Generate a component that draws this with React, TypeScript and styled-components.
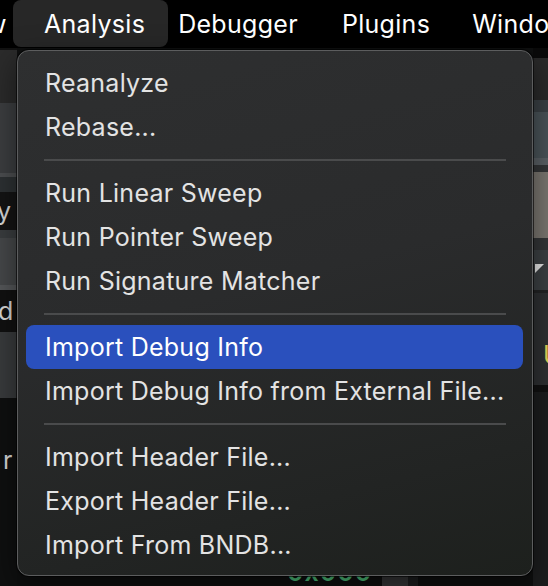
import React from 'react';
import styled, { createGlobalStyle } from 'styled-components';

const GlobalStyle = createGlobalStyle`
    html, body {
        margin: 0;
        padding: 0;
        background: #000;
    }
    body {
        font-family: Inter, "Noto Sans", "Liberation Sans", sans-serif;
        -webkit-font-smoothing: antialiased;
    }
`;

const Page = styled.div`
    position: relative;
    width: 548px;
    height: 586px;
    overflow: hidden;
    background: #0e0f0f;
    display: flex;
    flex-direction: column;
`;

const MenuBar = styled.div`
    height: 48px;
    flex: none;
    background: #000;
    display: flex;
    align-items: stretch;
`;

const MenuBarItem = styled.div<{ active?: boolean; pad?: string }>`
    display: flex;
    align-items: center;
    padding: ${(p) => p.pad || '0 21px'};
    margin-bottom: 1px;
    border-radius: 8px;
    background: ${(p) => (p.active ? '#272727' : 'transparent')};
    color: #fff;
    font-size: 25px;
    letter-spacing: 0.3px;
    white-space: nowrap;
`;

const EdgeItem = styled(MenuBarItem)`
    width: 13px;
    flex: none;
    overflow: hidden;
`;

const EdgeText = styled.span`
    margin-left: -14px;
`;

const Workspace = styled.div`
    flex: 1;
    display: flex;
    min-height: 0;
`;

const SidePane = styled.div<{ width: number }>`
    width: ${(p) => p.width}px;
    flex: none;
    display: flex;
    flex-direction: column;
    overflow: hidden;
`;

const Band = styled.div<{ h?: number; bg: string; align?: string }>`
    height: ${(p) => (p.h ? `${p.h}px` : 'auto')};
    flex: ${(p) => (p.h ? 'none' : '1')};
    background: ${(p) => p.bg};
    display: flex;
    align-items: ${(p) => p.align || 'center'};
    overflow: hidden;
    color: #d8d8d8;
    font-size: 25px;
`;

const Glyph = styled.span<{ shift?: number; top?: number; color?: string }>`
    margin-left: ${(p) => p.shift ?? 0}px;
    margin-top: ${(p) => p.top ?? 0}px;
    color: ${(p) => p.color || '#d8d8d8'};
    line-height: 1;
`;

const CenterPane = styled.div`
    flex: 1;
    background: #0e0f0f;
    display: flex;
    flex-direction: column;
    justify-content: flex-end;
`;

const BottomRow = styled.div`
    height: 12px;
    display: flex;
    align-items: flex-start;
    padding-left: 270px;
    overflow: hidden;
`;

const HexText = styled.span`
    color: #4fc27c;
    font-size: 25px;
    font-weight: 600;
    line-height: 1;
    margin-top: -14px;
    letter-spacing: 1px;
`;

const GreyBlock = styled.div`
    width: 26px;
    height: 12px;
    margin-left: 10px;
    background: #363738;
    border-right: 10px solid #1d1e1f;
`;

const Dropdown = styled.div`
    position: absolute;
    left: 17px;
    top: 50px;
    width: 516px;
    height: 526px;
    box-sizing: border-box;
    border: 1px solid #5c5d5e;
    border-radius: 12px;
    background: linear-gradient(165deg, #2e2f30 0%, #2a2b2c 45%, #222423 80%, #1d201d 100%);
    box-shadow: 0 0 0 1px rgba(0, 0, 0, 0.6), 0 10px 30px rgba(0, 0, 0, 0.5);
    padding: 10px 9px 0 8px;
    display: flex;
    flex-direction: column;
`;

const Item = styled.div<{ selected?: boolean }>`
    height: 44px;
    flex: none;
    display: flex;
    align-items: center;
    padding-left: 19px;
    border-radius: 8px;
    font-size: 25px;
    letter-spacing: 0.25px;
    white-space: nowrap;
    color: ${(p) => (p.selected ? '#ffffff' : '#e3e3e3')};
    background: ${(p) => (p.selected ? '#2a50bd' : 'transparent')};
`;

const Separator = styled.div`
    height: 22px;
    flex: none;
    display: flex;
    align-items: center;
    padding: 0 17px 0 18px;
    &::after {
        content: '';
        flex: 1;
        height: 2px;
        background: #4a4b4c;
    }
`;

const Triangle = styled.div`
    width: 0;
    height: 0;
    margin-left: 2px;
    margin-top: 14px;
    border-right: 9px solid transparent;
    border-top: 9px solid #e8e8e8;
`;

type Entry = { label: string; selected?: boolean } | 'sep';

const entries: Entry[] = [
    { label: 'Reanalyze' },
    { label: 'Rebase...' },
    'sep',
    { label: 'Run Linear Sweep' },
    { label: 'Run Pointer Sweep' },
    { label: 'Run Signature Matcher' },
    'sep',
    { label: 'Import Debug Info', selected: true },
    { label: 'Import Debug Info from External File...' },
    'sep',
    { label: 'Import Header File...' },
    { label: 'Export Header File...' },
    { label: 'Import From BNDB...' },
];

const App = (): JSX.Element => {
    return (
        <>
            <GlobalStyle />
            <Page>
                <MenuBar>
                    <EdgeItem pad="0">
                        <EdgeText>w</EdgeText>
                    </EdgeItem>
                    <MenuBarItem active pad="0 23px 0 31px">
                        Analysis
                    </MenuBarItem>
                    <MenuBarItem pad="0 0 0 10px">Debugger</MenuBarItem>
                    <MenuBarItem pad="0 0 0 44px">Plugins</MenuBarItem>
                    <MenuBarItem pad="0 0 0 42px">Window</MenuBarItem>
                </MenuBar>
                <Workspace>
                    <SidePane width={17}>
                        <Band h={2} bg="#121212" />
                        <Band h={53} bg="#2b2b2b" />
                        <Band h={70} bg="#3c3e40" />
                        <Band h={4} bg="#4c4e50" />
                        <Band h={15} bg="#2d3133" />
                        <Band h={38} bg="#141414">
                            <Glyph shift={-3}>y</Glyph>
                        </Band>
                        <Band h={8} bg="#3a3d3f" />
                        <Band h={47} bg="#46484a" />
                        <Band h={5} bg="#555759" />
                        <Band h={42} bg="#111111">
                            <Glyph shift={-2}>d</Glyph>
                        </Band>
                        <Band h={66} bg="#393b3d" />
                        <Band bg="#0f1010" align="flex-start">
                            <Glyph shift={3} top={50}>
                                r
                            </Glyph>
                        </Band>
                    </SidePane>
                    <CenterPane>
                        <BottomRow>
                            <HexText>0x000</HexText>
                            <GreyBlock />
                        </BottomRow>
                    </CenterPane>
                    <SidePane width={15}>
                        <Band h={10} bg="#0a0a0a" />
                        <Band h={42} bg="#2a2a2a" />
                        <Band h={12} bg="#3a4045" />
                        <Band h={46} bg="#4a5358" />
                        <Band h={7} bg="#5a6065" />
                        <Band h={7} bg="#333537" />
                        <Band h={66} bg="#7a7670" />
                        <Band h={12} bg="#333537" />
                        <Band h={40} bg="#3c4043" align="flex-start">
                            <Triangle />
                        </Band>
                        <Band h={3} bg="#222324" />
                        <Band h={92} bg="#2e3032" align="flex-start">
                            <Glyph shift={10} top={50} color="#e6d85a">
                                U
                            </Glyph>
                        </Band>
                        <Band h={7} bg="#111111" />
                        <Band bg="#1c1d1e" />
                    </SidePane>
                </Workspace>
                <Dropdown>
                    {entries.map((e, i) =>
                        e === 'sep' ? (
                            <Separator key={i} />
                        ) : (
                            <Item key={i} selected={e.selected}>
                                {e.label}
                            </Item>
                        )
                    )}
                </Dropdown>
            </Page>
        </>
    );
};

export default App;
